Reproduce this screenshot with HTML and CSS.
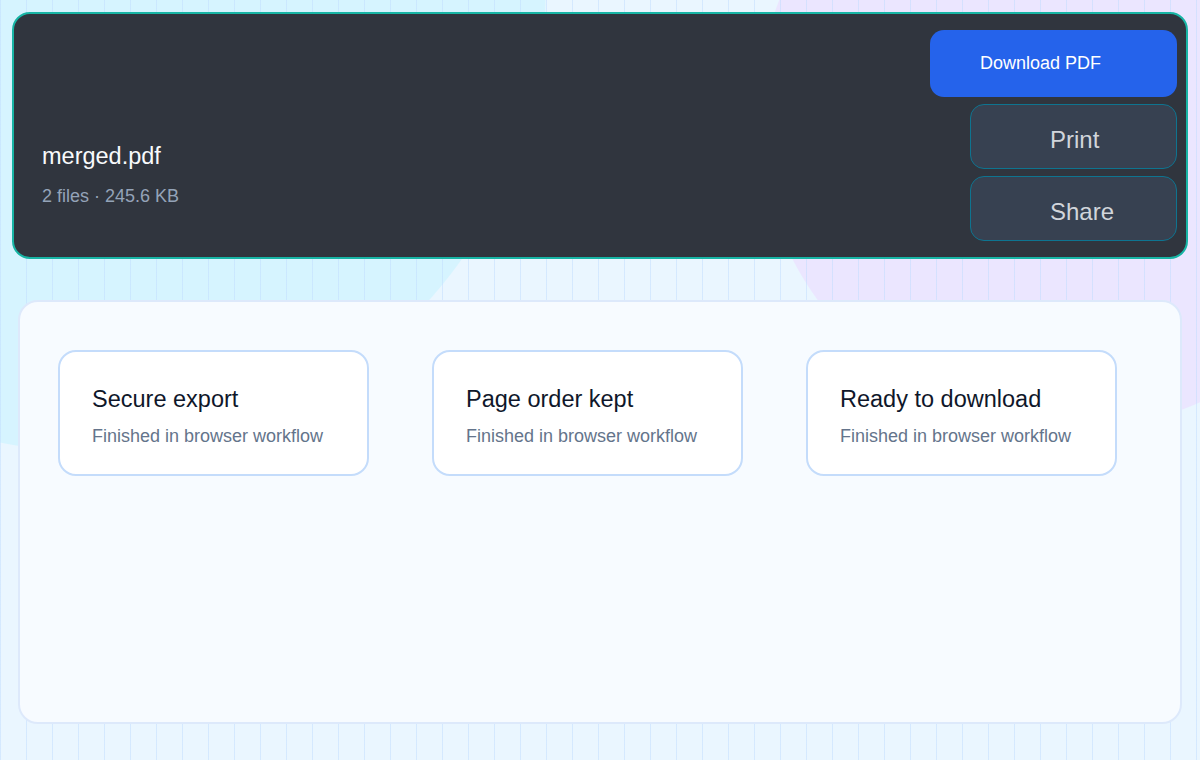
FILE: index.html
```html
<!DOCTYPE html>
<html lang="en">

<head>
  <meta charset="UTF-8">
  <meta name="viewport" content="width=device-width, initial-scale=1.0">
  <title>merged.pdf</title>
  <link rel="stylesheet" href="styles.css">
</head>

<body>
  <div class="result-bar">
    <div class="file-info">
      <div class="file-name">merged.pdf</div>
      <div class="file-meta">2 files · 245.6 KB</div>
    </div>
    <div class="actions">
      <button class="btn btn-primary">Download PDF</button>
      <button class="btn btn-secondary">Print</button>
      <button class="btn btn-secondary">Share</button>
    </div>
  </div>

  <div class="panel">
    <div class="features">
      <div class="feature">
        <div class="feature-title">Secure export</div>
        <div class="feature-text">Finished in browser workflow</div>
      </div>
      <div class="feature">
        <div class="feature-title">Page order kept</div>
        <div class="feature-text">Finished in browser workflow</div>
      </div>
      <div class="feature">
        <div class="feature-title">Ready to download</div>
        <div class="feature-text">Finished in browser workflow</div>
      </div>
    </div>
  </div>
</body>

</html>
```

FILE: styles.css
```css
* {
  box-sizing: border-box;
}

body {
  font-family: "Liberation Sans", Arial, sans-serif;
  margin: 0;
  padding: 12px;
  min-height: 100vh;
  background:
    linear-gradient(90deg, rgba(191, 219, 254, 0.5) 1px, transparent 1px) 0 0 / 26px 100%,
    radial-gradient(circle 455px at 90px -4px, #d6f4ff 455px, transparent 456px),
    radial-gradient(circle 314px at 1072px 115px, #ebe6ff 314px, transparent 315px),
    #eaf6ff;
}

.result-bar {
  display: flex;
  justify-content: space-between;
  height: 247px;
  padding: 16px 9px 16px 28px;
  background-color: #30353e;
  border: 2px solid #17b5a5;
  border-radius: 18px;
}

.file-info {
  align-self: flex-end;
  padding-bottom: 34px;
}

.file-name {
  color: #f8fafc;
  font-size: 23.5px;
  line-height: 27px;
  margin-bottom: 16px;
}

.file-meta {
  color: #94a3b8;
  font-size: 18px;
  line-height: 21px;
}

.actions {
  display: flex;
  flex-direction: column;
  align-items: flex-end;
  gap: 7px;
}

.btn {
  font-family: inherit;
  text-align: left;
  cursor: pointer;
  border-radius: 14px;
}

.btn-primary {
  width: 247px;
  height: 67px;
  padding: 0 0 0 50px;
  background-color: #2563eb;
  border: none;
  color: #ffffff;
  font-size: 18px;
}

.btn-secondary {
  width: 207px;
  height: 65px;
  padding: 6px 0 0 79px;
  background-color: #374151;
  border: 1px solid #0e7490;
  color: #d1d5db;
  font-size: 24px;
}

.panel {
  height: 424px;
  margin: 41px 6px 0;
  padding: 48px 38px;
  background-color: #f7fbff;
  border: 2px solid #dde9fb;
  border-radius: 20px;
}

.features {
  display: grid;
  grid-template-columns: repeat(3, 311px);
  column-gap: 63px;
}

.feature {
  height: 126px;
  padding: 34px 32px 0;
  background-color: #ffffff;
  border: 2px solid #c4dcfb;
  border-radius: 18px;
}

.feature-title {
  color: #0f172a;
  font-size: 23.5px;
  line-height: 27px;
  margin-bottom: 13px;
}

.feature-text {
  color: #64748b;
  font-size: 18px;
  line-height: 21px;
}
```
